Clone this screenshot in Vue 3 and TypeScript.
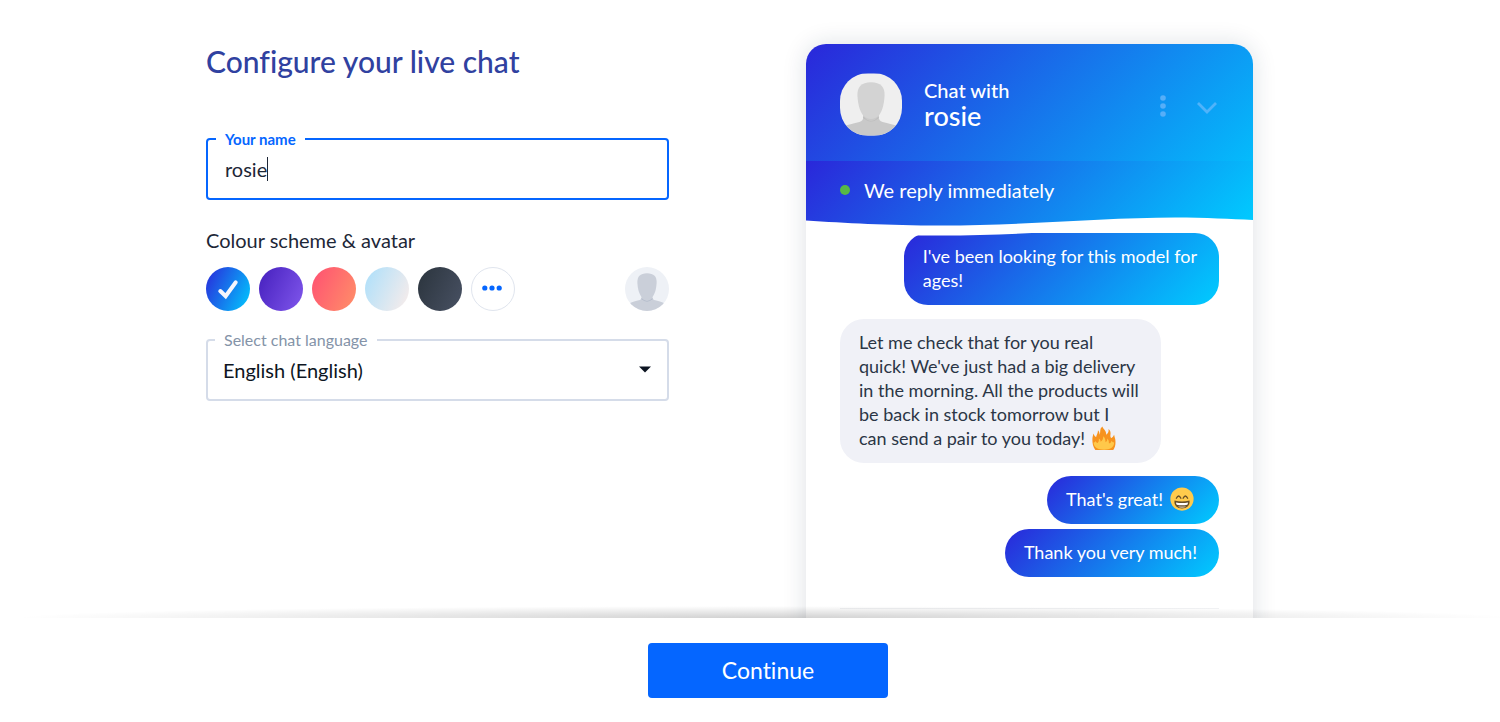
<script setup lang="ts">
import { ref } from 'vue'

interface Scheme { id: string; label: string }
interface Message { from: 'visitor' | 'agent'; lines: string[]; emoji?: 'fire' | 'grin' }

const name = ref('rosie')
const language = ref('en')
const scheme = ref('blue')

const schemes: Scheme[] = [
  { id: 'blue', label: 'Blue' },
  { id: 'purple', label: 'Purple' },
  { id: 'coral', label: 'Coral' },
  { id: 'ice', label: 'Ice' },
  { id: 'graphite', label: 'Graphite' },
]

const messages: Message[] = [
  { from: 'visitor', lines: ["I've been looking for this model for", 'ages!'] },
  {
    from: 'agent',
    lines: [
      'Let me check that for you real',
      "quick! We've just had a big delivery",
      'in the morning. All the products will',
      'be back in stock tomorrow but I',
      'can send a pair to you today!',
    ],
    emoji: 'fire',
  },
  { from: 'visitor', lines: ["That's great!"], emoji: 'grin' },
  { from: 'visitor', lines: ['Thank you very much!'] },
]
</script>

<template>
  <div class="page">
    <main class="content">
      <form class="settings" @submit.prevent>
        <h1 class="title">Configure your live chat</h1>

        <fieldset class="field field-active">
          <legend><label for="name">Your name</label></legend>
          <div class="field-row">
            <input id="name" v-model="name" class="name-input" type="text" size="4" />
            <span class="caret"></span>
          </div>
        </fieldset>

        <p class="group-label" id="scheme-label">Colour scheme &amp; avatar</p>
        <div class="choices">
          <div class="swatches" role="radiogroup" aria-labelledby="scheme-label">
            <label v-for="s in schemes" :key="s.id" class="swatch">
              <input v-model="scheme" type="radio" name="scheme" :value="s.id" :class="s.id" :aria-label="s.label" />
              <svg v-if="scheme === s.id" class="check" viewBox="0 0 43 43" aria-hidden="true">
                <path d="M14 23.500l5.200 5L29 15" fill="none" stroke="#f4f6fc" stroke-width="4" stroke-linecap="round" />
              </svg>
            </label>
            <button class="more" type="button" aria-label="More colours">
              <svg viewBox="0 0 20 6" aria-hidden="true">
                <circle cx="2.800" cy="3" r="2.600" /><circle cx="10" cy="3" r="2.600" /><circle cx="17.200" cy="3" r="2.600" />
              </svg>
            </button>
          </div>
          <button class="avatar-button" type="button" aria-label="Choose avatar">
            <svg viewBox="0 0 64 64" aria-hidden="true">
              <rect width="64" height="64" fill="#eef1f6" />
              <path d="M0 64v-8q12-6 20-7.500q4-1 4-5V38h16v5.500q0 4 4 5q8 1.500 20 7.500v8z" fill="#cacfd9" />
              <path d="M24 45q8 9 16 0v2q-8 7-16 0z" fill="#b4bccb" />
              <path d="M32 9c10 0 14.500 5 14 14c-.5 8-2.500 24-14 24S18.500 31 18 23c-.5-9 4-14 14-14z" fill="#cacfd9" />
            </svg>
          </button>
        </div>

        <fieldset class="field field-language">
          <legend><label for="language">Select chat language</label></legend>
          <div class="field-row">
            <select id="language" v-model="language" class="language">
              <option value="en">English (English)</option>
            </select>
            <svg class="arrow" viewBox="0 0 12 7" aria-hidden="true"><path d="M0 .5h12L6 6.500z" fill="#0d1522" /></svg>
          </div>
        </fieldset>
      </form>

      <section class="widget" aria-label="Chat preview">
        <header class="widget-head">
          <div class="profile">
            <svg class="agent-avatar" viewBox="0 0 64 64" aria-hidden="true">
              <rect width="64" height="64" fill="#efefef" />
              <path d="M0 64v-9q12-3 20-5q4-1 4-5V38h16v7q0 4 4 5q8 2 20 5v9z" fill="#c9c9c9" />
              <path d="M24 44q8 10 16 0v2q-8 7-16 0z" fill="#bcbcbc" />
              <path d="M32 9c10 0 14.500 5 14 14c-.5 8-2.500 24-14 24S18.500 31 18 23c-.5-9 4-14 14-14z" fill="#d3d3d3" />
            </svg>
            <div class="agent-text">
              <span class="chat-with">Chat with</span>
              <span class="agent-name">{{ name }}</span>
            </div>
            <div class="actions">
              <button class="icon-button" type="button" aria-label="Options">
                <svg width="6" height="22" viewBox="0 0 6 22" fill="#56aef8">
                  <circle cx="3" cy="3" r="2.800" /><circle cx="3" cy="11" r="2.800" /><circle cx="3" cy="19" r="2.800" />
                </svg>
              </button>
              <button class="icon-button" type="button" aria-label="Minimise">
                <svg width="20" height="18" viewBox="0 0 20 18"><path d="M1 6l9 9 9-9" fill="none" stroke="#4fb3fa" stroke-width="2.800" /></svg>
              </button>
            </div>
          </div>
          <div class="status">
            <span class="dot"></span>
            <span>We reply immediately</span>
          </div>
          <svg class="wave" viewBox="0 0 447 24" preserveAspectRatio="none" aria-hidden="true">
            <path d="M0 5.500C40 8 80 10.500 135 10.500C220 10.500 300 2.500 369 2.500C400 2.500 425 4 447 5V15C425 14 400 12.500 369 12.500C300 12.500 220 20.500 135 20.500C80 20.500 40 18 0 15.500z" fill="#fff" />
          </svg>
        </header>

        <div class="messages">
          <p v-for="(m, i) in messages" :key="i" class="bubble" :class="m.from">
            <template v-for="(line, j) in m.lines" :key="j"><br v-if="j > 0" />{{ line }}</template>
            <svg v-if="m.emoji === 'fire'" class="emoji" viewBox="0 0 64 64" role="img" aria-label="fire">
              <path d="M1 36C1 29 3 25 4 20c2 5 3 8 7 9c1-6 5-10 5-18c4 4 4 8 4 12c4-7-1-16 8-22c1 7 10 9 10 22c5-3 7-8 6-15c6 5 6 10 5 17c0 4 1 6 3 7c3-2 5-5 7-9c1 5 2 8 3 12c3 21-4 39-30 39S1 52 1 36z" fill="#f7931e" />
              <path d="M4 44c2 0 4-1 5-4c2 3 3 5 6 5c3-4 4-7 3-12c4 2 5 5 5 9c5-3 7-9 7-15c5 4 6 10 6 16c4-2 5-6 5-10c4 4 4 8 4 13c4 0 6-3 7-7c2 3 4 4 7 5c0 13-11 19-27 19S5 57 4 44z" fill="#ffc84a" />
            </svg>
            <svg v-if="m.emoji === 'grin'" class="emoji" viewBox="0 0 64 64" role="img" aria-label="grinning face">
              <circle cx="32" cy="32" r="31" fill="#ffcb4c" />
              <path d="M17 30q6-12 12 0M35 30q6-12 12 0" fill="none" stroke="#664e27" stroke-width="3.500" stroke-linecap="round" />
              <path d="M12 36q20 5 40 0c2 14-8 21-20 21S10 50 12 36z" fill="#664e27" />
              <path d="M16 41q16 3 32 0q0 4-2 6q-14 3-28 0q-2-2-2-6z" fill="#fff" />
              <path d="M21 51q11 2 22 0q-4 4-11 4t-11-4z" fill="#d9c6ae" />
            </svg>
          </p>
        </div>
        <hr class="divider" />
      </section>
    </main>

    <footer class="footer">
      <button class="continue" type="button">Continue</button>
    </footer>
  </div>
</template>

<style>
body { margin: 0; }
</style>

<style scoped>
.page {
  display: flex;
  flex-direction: column;
  height: 100vh;
  overflow: hidden;
  background: #fff;
  color: #1d2737;
  font-family: Lato, "Noto Sans", sans-serif;
  font-variant-ligatures: none;
}
*, *::before { box-sizing: border-box; }
button { padding: 0; border: 0; background: none; font: inherit; cursor: pointer; }
svg { display: block; }

.content {
  flex: 1;
  min-height: 0;
  display: grid;
  grid-template-columns: 463fr 447fr;
  column-gap: 137px;
  align-items: start;
  width: 100%;
  max-width: 1088px;
  margin: 0 auto;
  padding: 44px 41px 0 0;
}

.title {
  margin: 0;
  font-size: 30px;
  line-height: 34px;
  font-weight: 500;
  color: #3041a0;
}
.field {
  min-width: 0;
  margin: 0;
  padding: 0 16px 0 17px;
  border: 2px solid #d5dce9;
  border-radius: 4px;
}
.field legend {
  margin-left: -9px;
  padding: 0 9px;
  font-size: 15px;
  line-height: 20px;
  color: #8493a8;
}
.field-active { margin-top: 51px; border-color: #0566ff; }
.field-active legend { font-weight: 700; color: #0566ff; }
.field-row { display: flex; align-items: center; height: 49px; padding-bottom: 10px; }
.name-input {
  field-sizing: content;
  min-width: 0;
  padding: 0;
  border: 0;
  outline: 0;
  background: none;
  font: inherit;
  font-size: 20px;
  line-height: 24px;
  color: inherit;
  caret-color: transparent;
}
.caret { width: 1px; height: 24px; background: #1d2737; }

.group-label { margin: 28px 0 0; font-size: 20px; line-height: 24px; }
.choices { display: flex; justify-content: space-between; margin-top: 15px; }
.swatches { display: flex; gap: 9px; }
.swatch { display: grid; width: 44px; height: 44px; cursor: pointer; }
.swatch > * { grid-area: 1 / 1; }
.swatch input { appearance: none; width: 44px; height: 44px; margin: 0; border-radius: 50%; }
.check { width: 44px; height: 44px; pointer-events: none; }
.blue { background: linear-gradient(115deg, #2a27da, #00ccff); }
.purple { background: linear-gradient(115deg, #451fbd, #8057ec); }
.coral { background: linear-gradient(115deg, #ff5072, #ff9068); }
.ice { background: linear-gradient(115deg, #abdffb, #fbedea); }
.graphite { background: linear-gradient(115deg, #2b343d, #485163); }
.more {
  display: grid;
  place-items: center;
  width: 44px;
  height: 44px;
  border: 1px solid #e0e5ee;
  border-radius: 50%;
}
.more svg { width: 20px; height: 6px; margin: 0 2px 2px 0; fill: #0566ff; }
.avatar-button { width: 44px; height: 44px; border-radius: 50%; overflow: hidden; }

.field-language { margin-top: 19px; padding-left: 15px; }
.field-language legend { margin-left: -8px; font-size: 16px; }
.field-language .field-row { position: relative; }
.language {
  appearance: none;
  width: 100%;
  padding: 0;
  border: 0;
  outline: 0;
  background: none;
  font: inherit;
  font-size: 20px;
  line-height: 24px;
  color: #0d1522;
}
.arrow { position: absolute; right: 0; width: 12px; height: 7px; pointer-events: none; }

.widget {
  border-radius: 20px 20px 0 0;
  box-shadow: 0 0 24px rgba(20, 40, 70, 0.14);
  background: #fff;
  height: 700px;
}
.widget-head {
  position: relative;
  border-radius: 20px 20px 0 0;
  background: linear-gradient(135deg, #2a27da, #00ccff);
  color: #fff;
}
.profile { display: flex; align-items: center; gap: 22px; height: 117px; padding: 3px 34px 0; }
.agent-avatar { width: 62px; height: 63px; border-radius: 28px; }
.agent-text { display: flex; flex-direction: column; flex: 1; font-weight: 500; }
.chat-with { font-size: 20px; line-height: 24px; }
.agent-name { font-size: 27px; line-height: 28px; }
.actions { display: flex; gap: 20px; padding-top: 4px; }
.icon-button { width: 24px; height: 24px; display: grid; place-items: center; }
.status {
  display: flex;
  align-items: center;
  gap: 14px;
  height: 65px;
  padding: 0 34px 8px;
  background: linear-gradient(135deg, #2a27da, #00ccff);
  font-size: 20px;
  line-height: 24px;
}
.dot { width: 10px; height: 10px; border-radius: 50%; background: #57b846; }
.wave { position: absolute; left: 0; bottom: -13px; width: 100%; height: 24px; }

.messages { display: flex; flex-direction: column; padding: 7px 34px 0; }
.bubble {
  align-self: flex-end;
  margin: 0;
  padding: 11px 22px 13px 19px;
  border-radius: 24px;
  background: linear-gradient(135deg, #2a27da, #00ccff);
  color: #fff;
  font-size: 18px;
  line-height: 24px;
  white-space: nowrap;
}
.bubble.agent {
  align-self: flex-start;
  background: #f0f1f7;
  color: #2b3646;
}
.visitor + .agent { margin-top: 14px; }
.agent + .visitor { margin-top: 13px; }
.visitor + .visitor { margin-top: 5px; }
.emoji { display: inline-block; width: 24px; height: 24px; margin: 0 3px 0 7px; vertical-align: top; }
.divider { margin: 31px 34px 0; border: 0; border-top: 1px solid #f0f1f3; }

.footer {
  position: relative;
  display: flex;
  justify-content: center;
  padding: 25px 0 24px 36px;
  background: #fff;
}
.footer::before {
  content: "";
  position: absolute;
  left: 0;
  right: 0;
  bottom: 100%;
  height: 12px;
  background: radial-gradient(50% 100% at 51% 100%, rgba(0, 0, 0, 0.18), rgba(0, 0, 0, 0));
  pointer-events: none;
}
.continue {
  width: 240px;
  height: 55px;
  padding-bottom: 2px;
  border-radius: 4px;
  background: #0566ff;
  color: #fff;
  font-size: 23px;
}
</style>
